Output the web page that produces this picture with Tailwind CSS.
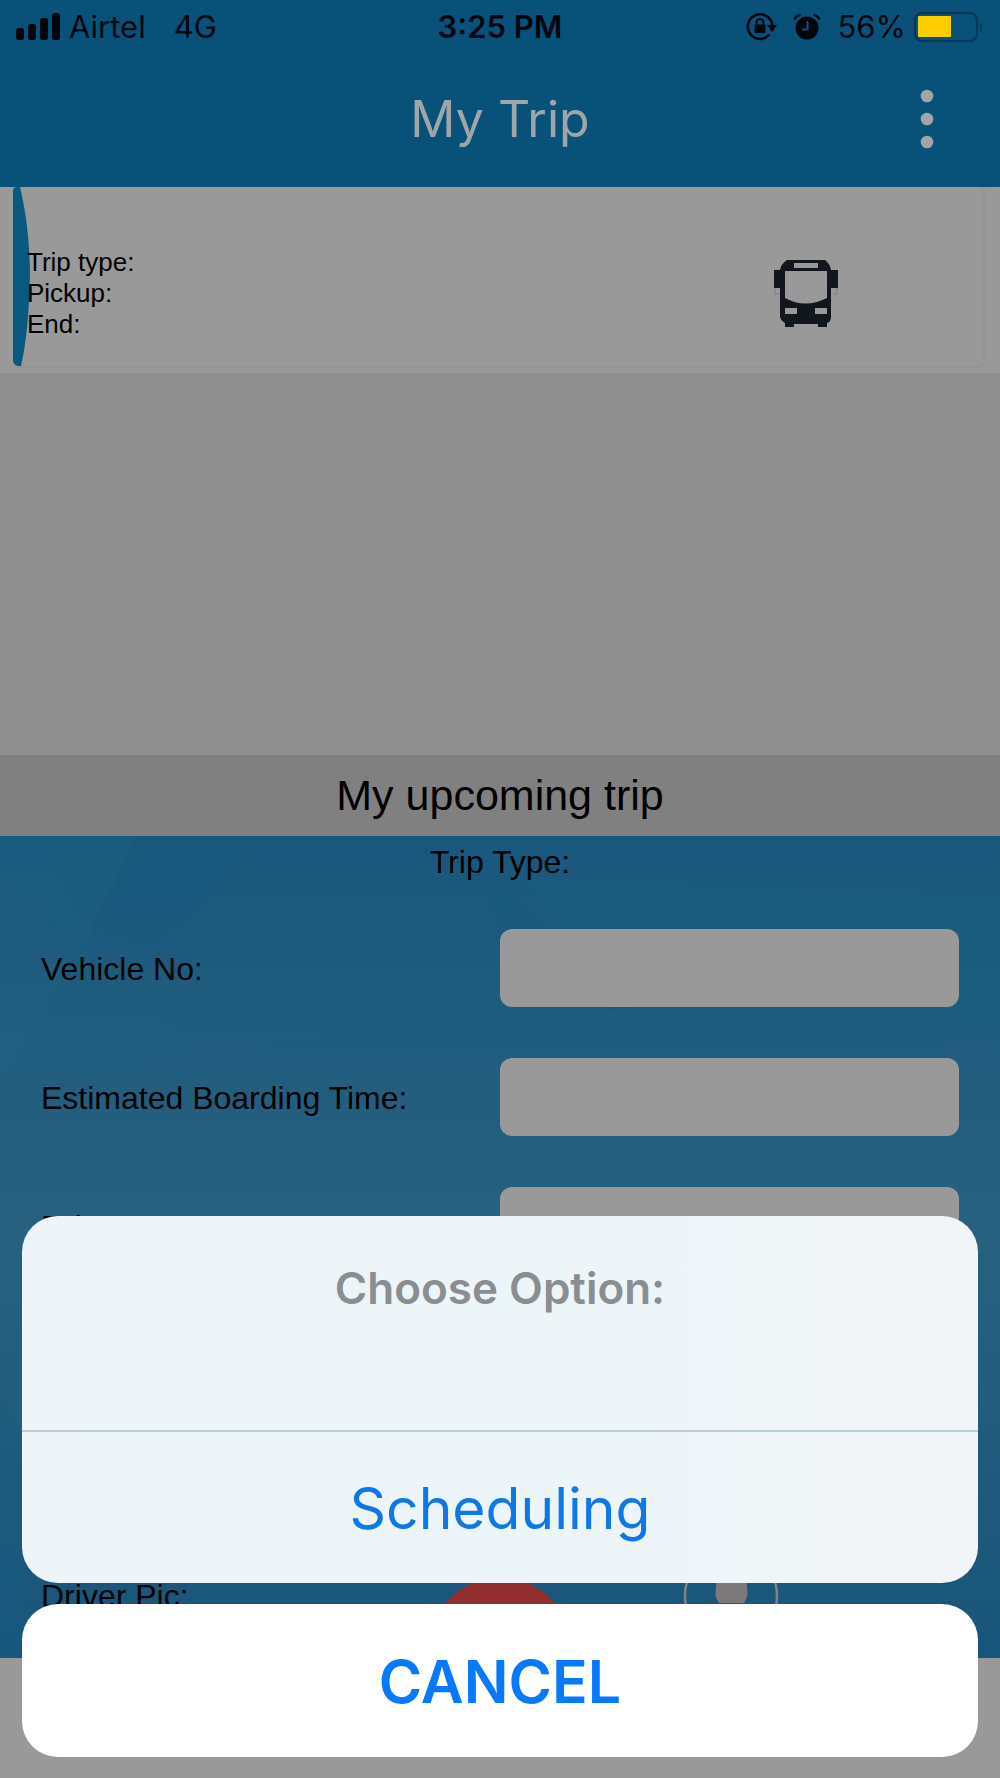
<!DOCTYPE html>
<html lang="en">
<head>
<meta charset="utf-8">
<meta name="viewport" content="width=device-width, initial-scale=1">
<title>My Trip</title>
<script src="https://cdn.jsdelivr.net/npm/@tailwindcss/browser@4"></script>
</head>
<body class="relative flex min-h-screen flex-col bg-[#999999] font-['Liberation_Sans',Arial,sans-serif] text-black">
  <header class="flex h-[187px] flex-col bg-[#085279] font-['Inter',sans-serif]">
    <!-- Status bar -->
    <div class="grid h-[54px] grid-cols-[1fr_auto_1fr] items-center px-4 text-[31px] leading-9 text-[#00060c]">
      <div class="flex items-center gap-2">
        <svg class="h-7 w-[45px]" viewBox="0 0 45 28" fill="currentColor" aria-hidden="true">
          <rect x="0" y="15" width="8" height="12" rx="2.5"/><rect x="12" y="11" width="8" height="16" rx="2.5"/><rect x="24" y="5" width="8" height="22" rx="2.5"/><rect x="36" y="0" width="8" height="27" rx="2.5"/>
        </svg>
        <span>Airtel</span>
        <span class="ml-5">4G</span>
      </div>
      <time class="font-semibold">3:25 PM</time>
      <div class="flex items-center justify-end">
        <svg class="mr-4 h-[30px] w-[31px]" viewBox="0 0 31 30" fill="none" stroke="currentColor" aria-hidden="true">
          <path d="M23.5 22.5A12.3 12.3 0 1 1 26.3 13" stroke-width="2.6"/>
          <path d="M21 13h10l-5 7z" fill="currentColor" stroke="none"/>
          <rect x="8.500" y="12.500" width="11" height="8.500" rx="1.200" fill="currentColor" stroke="none"/>
          <path d="M10.500 13V10.500a3.500 3.500 0 0 1 7 0V13" stroke-width="2"/>
        </svg>
        <svg class="mr-4 h-[28px] w-[28px]" viewBox="0 0 28 28" aria-hidden="true">
          <circle cx="14" cy="15" r="11.500" fill="currentColor"/>
          <path d="M1.500 6.500Q3 2.500 7.500 1.800M26.500 6.500Q25 2.500 20.500 1.800" fill="none" stroke="currentColor" stroke-width="2.600"/>
          <path d="M14.500 8v8.500H9" fill="none" stroke="#085279" stroke-width="2"/>
        </svg>
        <span class="mr-2">56%</span>
        <svg class="h-8 w-[70px]" viewBox="0 0 70 32" aria-hidden="true">
          <rect x="1" y="2" width="62" height="28" rx="7" fill="none" stroke="#05395a" stroke-width="2.200"/>
          <rect x="4" y="5" width="33" height="21" rx="1" fill="#ffcc00"/>
          <path d="M66 11q4 5 0 10z" fill="#05395a"/>
        </svg>
      </div>
    </div>
    <div class="grid grow grid-cols-[1fr_auto_1fr] items-center pb-1">
      <h1 class="col-start-2 text-[50px] leading-[60px] text-[#9ea5ab]">My Trip</h1>
      <button type="button" aria-label="More options" class="mr-[58px] justify-self-end p-1">
        <svg class="h-[60px] w-[22px]" viewBox="0 0 22 60" fill="#a1a4a8" aria-hidden="true"><circle cx="11" cy="7" r="6.300"/><circle cx="11" cy="30" r="6.300"/><circle cx="11" cy="53" r="6.300"/></svg>
      </button>
    </div>
  </header>

  <main class="flex flex-col">
    <section class="h-[186px] pr-[15px] pl-[13px]">
      <article class="relative flex h-[181px] items-center justify-between rounded-md border-r-2 border-b-2 border-[#939393] pt-[34px] pr-[144px] pl-3.5">
        <svg class="absolute top-0 left-0 h-full w-[18px]" viewBox="0 0 18 180" preserveAspectRatio="none" aria-hidden="true"><path d="M0 4Q0 0 4 0H7Q16 36 17 86Q16 145 8 180H5Q0 179 0 174Z" fill="#085880"/></svg>
        <div class="relative text-[26px] leading-[31px]">
          <p>Trip type:</p>
          <p>Pickup:</p>
          <p>End:</p>
        </div>
        <svg class="h-[68px] w-[66px]" viewBox="0 0 66 68" role="img" aria-label="Bus">
          <path fill="#11171c" fill-rule="evenodd" d="M14 0H52Q57 4 58 10H65V28H58V57Q58 62 54 63V67H45V64H21V67H12V63Q7 60 7 56V28H1V10H7Q8 4 14 0ZM21 3V8H45V3ZM12 11V38Q32 49 54 38V11ZM12 48V54H24V48ZM42 48V54H54V48Z"/>
          <path d="M2 28V34H6M64 28V34H60" fill="none" stroke="#85888a" stroke-width="1.500"/>
        </svg>
      </article>
    </section>
    <div class="h-[382px] bg-[#8f8f8f]"></div>
    <h2 class="h-[81px] bg-[#808080] text-center text-[43px] leading-[81px]">My upcoming trip</h2>

    <form class="relative h-[822px] overflow-hidden bg-linear-to-b from-[#18587c] via-[#286180] to-[#18557a] px-[41px]">
      <svg class="absolute inset-0 h-full w-full" viewBox="0 0 1000 822" preserveAspectRatio="none" aria-hidden="true">
        <path d="M0 0H50L85 110L0 50Z" fill="#1b6082" opacity=".5"/>
        <path d="M50 0H138L92 92L85 110Z" fill="#1c6182" opacity=".35"/>
        <path d="M138 0H275L150 115L92 92Z" fill="#15567a" opacity=".25"/>
        <path d="M0 50L80 110L10 235L0 240Z" fill="#236484" opacity=".3"/>
        <path d="M80 110L120 150L210 220L10 235Z" fill="#236484" opacity=".15"/>
        <path d="M450 0L640 180L610 176L500 100L480 0Z" fill="#165a7e" opacity=".3"/>
        <path d="M520 40L1000 60V180L570 100Z" fill="#175f82" opacity=".3"/>
        <path d="M430 190L620 174L640 215L230 215Z" fill="#175e82" opacity=".25"/>
        <path d="M620 174L1000 130V205L640 215Z" fill="#195f83" opacity=".25"/>
        <path d="M0 560L22 600V822H0Z" fill="#185e80" opacity=".3"/>
      </svg>
      <div class="relative flex flex-col text-[32px] leading-9">
        <p class="h-[93px] pt-2 text-center">Trip Type:</p>
        <div class="flex flex-col gap-[51px]">
          <div class="grid grid-cols-2 items-center">
            <label for="vehicle" class="pt-0.5">Vehicle No:</label>
            <input id="vehicle" type="text" class="h-[78px] w-full rounded-xl bg-[#999999] px-4">
          </div>
          <div class="grid grid-cols-2 items-center">
            <label for="boarding" class="pt-0.5">Estimated Boarding Time:</label>
            <input id="boarding" type="text" class="h-[78px] w-full rounded-xl bg-[#999999] px-4">
          </div>
          <div class="grid grid-cols-2 items-center">
            <label for="driver" class="pt-0.5">Driver Name:</label>
            <input id="driver" type="text" class="h-[78px] w-full rounded-xl bg-[#999999] px-4">
          </div>
        </div>
        <div class="mt-[313px] grid grid-cols-2 items-start">
          <span>Driver Pic:</span>
          <svg class="-ml-[72px] h-[144px] w-[352px]" viewBox="0 0 352 144" aria-hidden="true">
            <circle cx="72" cy="73" r="73" fill="#912f30"/>
            <circle cx="303" cy="18" r="46" fill="none" stroke="#808386" stroke-width="2.500"/>
            <path d="M288 0H319V10Q321 18 316 25H291Q286 18 288 10Z" fill="#7c797b"/>
          </svg>
        </div>
      </div>
    </form>
  </main>
  <div class="h-[120px]"></div>

  <!-- Action sheet -->
  <div role="dialog" aria-labelledby="sheet-title" class="absolute inset-x-[22px] bottom-[21px] flex flex-col gap-[21px] font-['Inter',sans-serif]">
    <div class="overflow-hidden rounded-[36px] bg-linear-to-r from-[#eef4f8] via-[#ecf5f9] to-[#f2f5f7]">
      <h2 id="sheet-title" class="h-[214px] pt-11 text-center text-[44px] leading-[56px] font-semibold text-[#8b8e90]">Choose Option:</h2>
      <button type="button" class="block h-[153px] w-full border-t-2 border-[#b9d0dc] pt-0.5 text-center text-[57px] leading-[72px] text-[#0f78e8]">Scheduling</button>
    </div>
    <button type="button" class="h-[153px] rounded-[36px] bg-white pt-0.5 text-center text-[59px] leading-[72px] font-semibold text-[#067afb]">CANCEL</button>
  </div>
</body>
</html>
